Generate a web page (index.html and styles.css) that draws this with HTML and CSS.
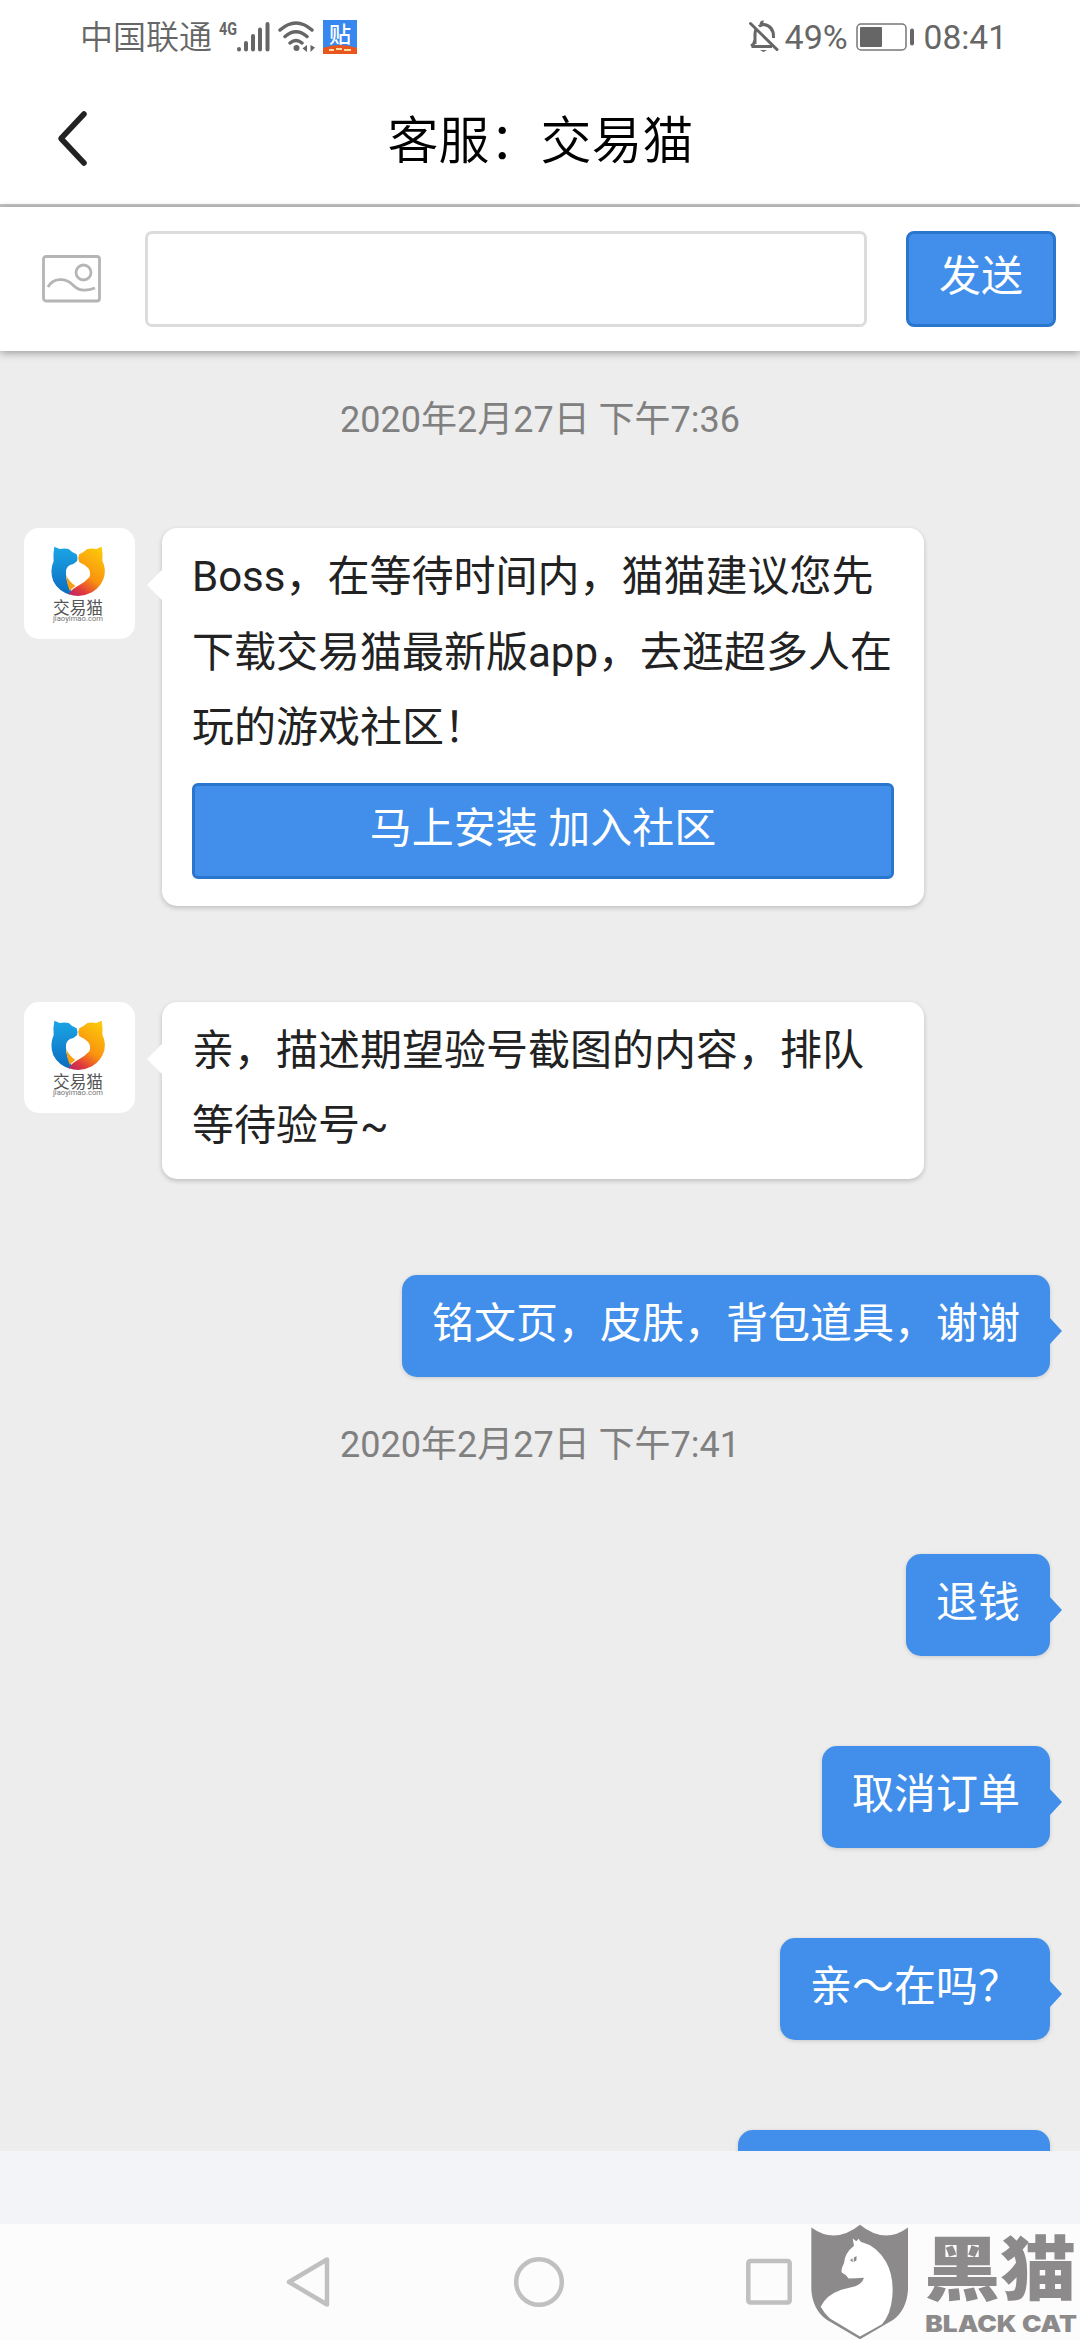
FILE: index.html
```html
<!DOCTYPE html>
<html lang="zh-CN">
<head>
    <meta charset="UTF-8">
    <meta name="viewport" content="width=device-width, initial-scale=1.0">
    <title>客服：交易猫</title>
    <link rel="stylesheet" href="styles.css">
</head>
<body>
    <!-- shared avatar logo -->
    <svg class="defs" width="0" height="0">
        <defs>
            <linearGradient id="blueCat" x1="0" y1="0" x2="0" y2="1">
                <stop offset="0" stop-color="#1ba6e6"/>
                <stop offset="1" stop-color="#0b6cc0"/>
            </linearGradient>
            <linearGradient id="goldCat" x1="0.7" y1="0" x2="0.2" y2="1">
                <stop offset="0" stop-color="#fcc60a"/>
                <stop offset="0.55" stop-color="#f9920f"/>
                <stop offset="0.85" stop-color="#e23a3c"/>
                <stop offset="1" stop-color="#c22a5e"/>
            </linearGradient>
            <symbol id="catLogo" viewBox="72 84 333 333">
                <path fill="url(#blueCat)" d="M163 140 L179 147 Q194 144 206 147 Q216 158 230 163 Q234 172 231 184 Q222 193 210 195 Q196 203 198 222 Q198 248 214 270 L210 284 Q176 275 160 244 Q148 213 161 183 Q159 160 163 140Z"/>
                <path fill="#f9a010" d="M199 226 Q207 246 226 257 L209 272 Q199 250 199 226Z"/>
                <path fill="url(#goldCat)" d="M305 140 L289 147 Q274 144 262 147 Q250 158 238 163 Q232 174 238 187 Q253 193 265 205 Q274 219 268 232 Q254 248 232 259 Q217 266 205 282 Q240 296 276 277 Q305 260 313 229 Q318 205 307 182 Q309 160 305 140Z"/>
                <text x="234" y="341" class="logo-cn" textLength="150" lengthAdjust="spacingAndGlyphs">交易猫</text>
                <text x="234" y="364" class="logo-en" textLength="150" lengthAdjust="spacingAndGlyphs">jiaoyimao.com</text>
            </symbol>
        </defs>
    </svg>

    <div class="status-bar">
        <div class="status-left">
            <span class="carrier">中国联通</span>
            <svg class="signal" width="140" height="40" viewBox="0 0 140 40">
                <text x="0" y="18" class="net" textLength="18" lengthAdjust="spacingAndGlyphs">4G</text>
                <g stroke="#666" stroke-width="4" stroke-linecap="round">
                    <path d="M20 32v0.5M27 26v6.500M34 19v13.500M41 12.500v20M48.500 7v25.500"/>
                </g>
                <g fill="none" stroke="#666" stroke-width="3.500" stroke-linecap="round">
                    <path d="M61 13Q77 -1 93 13M66 19.500Q77 10 88 19.500M71 26Q77 21 83 26"/>
                </g>
                <circle cx="77.500" cy="31" r="3" fill="#666"/>
                <path d="M88 28v7l-4.500-3.500zM91.500 28v7l4.500-4.500z" fill="#666"/>
                <rect x="104" y="3" width="34" height="34" fill="#3687f0"/>
                <path d="M104 31Q121 25 138 31V37H104Z" fill="#e8561e"/>
                <path d="M110 33h5M117 32h6M125 33h7" stroke="#fbd9a0" stroke-width="2"/>
                <text x="121" y="25" class="tieba">贴</text>
            </svg>
        </div>
        <div class="status-right">
            <svg width="32" height="34" viewBox="0 0 32 34" fill="none" stroke="#666" stroke-width="3">
                <path d="M3.500 26.500H24M7 24V14Q7 11.500 8 9.500M11 6.500Q13 4.500 16 4.500Q25.500 6 25.500 17V18M3 26Q6.500 24 7 20M13 4.500Q13.500 1.500 15.500 2"/>
                <path d="M2.500 3.500L29 29.500" stroke-linecap="round"/>
                <path d="M12 30h7l-3.500 2z" fill="#666" stroke="none"/>
            </svg>
            <span class="percent">49%</span>
            <svg class="battery" width="59" height="28" viewBox="0 0 59 28">
                <rect x="1" y="1" width="49" height="26" rx="4" fill="none" stroke="#777" stroke-width="1.500"/>
                <rect x="4" y="4" width="22" height="20" rx="1" fill="#666"/>
                <rect x="54" y="5.500" width="4" height="17" rx="2" fill="#666"/>
            </svg>
            <span class="clock">08:41</span>
        </div>
    </div>

    <div class="header">
        <svg class="back" width="31" height="58" viewBox="0 0 31 58">
            <path d="M27 4L4 28.500L27 53" fill="none" stroke="#222" stroke-width="5.500" stroke-linecap="round" stroke-linejoin="round"/>
        </svg>
        <h1>客服：交易猫</h1>
    </div>

    <div class="composer">
        <svg class="pic-icon" width="60" height="48" viewBox="0 0 60 48" fill="none" stroke="#b5b5b5" stroke-width="2.800">
            <rect x="1.500" y="1.500" width="56" height="44.500" rx="2.500"/>
            <circle cx="41.500" cy="17.500" r="7.500"/>
            <path d="M6 32C11 23 23 22 31 30C37 37 45 36 53 33"/>
        </svg>
        <input class="msg-input" type="text">
        <button class="btn send-btn">发送</button>
    </div>

    <div class="chat">
        <p class="time">2020年2月27日 下午7:36</p>

        <div class="row">
            <svg class="avatar"><use href="#catLogo"/></svg>
            <div class="bubble">
                <p>Boss，在等待时间内，猫猫建议您先<br>下载交易猫最新版app，去逛超多人在<br>玩的游戏社区！</p>
                <button class="btn install-btn">马上安装 加入社区</button>
            </div>
        </div>

        <div class="row">
            <svg class="avatar"><use href="#catLogo"/></svg>
            <div class="bubble">
                <p>亲，描述期望验号截图的内容，排队<br>等待验号~</p>
            </div>
        </div>

        <div class="row mine">
            <div class="bubble"><p>铭文页，皮肤，背包道具，谢谢</p></div>
        </div>

        <p class="time second">2020年2月27日 下午7:41</p>

        <div class="row mine">
            <div class="bubble"><p>退钱</p></div>
        </div>
        <div class="row mine">
            <div class="bubble"><p>取消订单</p></div>
        </div>
        <div class="row mine">
            <div class="bubble"><p>亲～在吗？</p></div>
        </div>
        <div class="row mine">
            <div class="bubble cut"></div>
        </div>
    </div>

    <div class="bottom-strip"></div>

    <div class="nav-bar">
        <svg width="46" height="52" viewBox="0 0 46 52">
            <path d="M42 3.500V48.500L4 26Z"/>
        </svg>
        <svg width="50" height="52" viewBox="0 0 50 52">
            <circle cx="25" cy="26" r="22.800"/>
        </svg>
        <svg width="46" height="52" viewBox="0 0 46 52">
            <rect x="2.300" y="5" width="41.400" height="41.400" rx="2"/>
        </svg>
    </div>

    <!-- watermark -->
    <svg class="watermark" viewBox="90 70 810 350">
        <path fill="#8c8a8b" d="M94 83Q166 135 240 75Q314 135 384 83V270Q380 330 340 360L240 418L140 360Q98 330 94 270Z"/>
        <path fill="#fff" d="M218 116L229 124L236 117L242 126Q290 138 318 186Q342 230 337 290Q332 345 306 373L240 410L150 356Q132 340 122 321Q138 286 184 270L226 259Q246 252 252 234Q226 236 206 236Q200 225 186 219Q181 210 192 190Q194 160 222 138Z"/>
        <path fill="#8c8a8b" d="M210 181L217 175L219 187ZM222 172L230 169L229 183L221 186Z"/>
        <text x="433" y="285" class="wm-cn" textLength="456" lengthAdjust="spacingAndGlyphs">黑猫</text>
        <text x="436" y="397" class="wm-en" textLength="455" lengthAdjust="spacingAndGlyphs">BLACK CAT</text>
    </svg>
</body>
</html>
```
FILE: styles.css
```css
:root {
    --blue: #418fea;
    --blue-dark: #2a75cd;
    --gray: #666;
    --bg: #ededed;
}

* {
    box-sizing: border-box;
}

body {
    margin: 0;
    width: 1080px;
    height: 2340px;
    overflow: hidden;
    position: relative;
    display: flex;
    flex-direction: column;
    background: #fff;
    font-family: Roboto, 'Noto Sans CJK SC', sans-serif;
}

h1, p {
    margin: 0;
    font-weight: 400;
}

.defs {
    position: absolute;
}

/* status bar */
.status-bar {
    height: 74px;
    padding: 0 73px 0 80px;
    display: flex;
    justify-content: space-between;
    color: var(--gray);
}

.status-left,
.status-right {
    display: flex;
    align-items: center;
}

.carrier {
    font-size: 33px;
    font-weight: 350;
    line-height: 74px;
    width: 139px;
    padding-top: 1px;
    white-space: nowrap;
}

.net {
    font: bold 19px Roboto, sans-serif;
    fill: var(--gray);
}

.tieba {
    font: 500 22px 'Noto Sans CJK SC', sans-serif;
    fill: #fff;
    text-anchor: middle;
}

.percent {
    font-size: 34px;
    margin-left: 5px;
    width: 71px;
}

.battery {
    margin-right: 9px;
}

.clock {
    font-size: 33.500px;
}

/* title */
.header {
    height: 133px;
    padding: 0 57px;
    display: flex;
    align-items: center;
    border-bottom: 3px solid #c3c3c3;
}

.header h1 {
    flex: 1;
    margin-right: 30px;
    padding-top: 5px;
    text-align: center;
    font-size: 51px;
    font-weight: 350;
    line-height: 1;
    color: #000;
}

/* message input */
.composer {
    height: 144px;
    padding: 0 24px 0 42px;
    display: flex;
    align-items: center;
    background: #fff;
    box-shadow: 0 2px 8px rgba(0,0,0,0.35);
    z-index: 1;
}

.pic-icon {
    margin-top: -1px;
}

.msg-input {
    width: 722px;
    height: 96px;
    margin: 0 39px 0 43px;
    border: 3px solid #dcdcdc;
    border-radius: 7px;
    background: #fff;
}

.btn {
    height: 96px;
    padding: 0 0 4px;
    border: 3px solid var(--blue-dark);
    border-radius: 8px;
    background: var(--blue);
    color: #fff;
    font-family: inherit;
    font-size: 42px;
    line-height: 1;
}

.send-btn {
    width: 150px;
}

/* chat */
.chat {
    height: 1800px;
    overflow: hidden;
    background: var(--bg);
    padding: 39px 30px 0 24px;
}

.time {
    height: 60px;
    line-height: 60px;
    text-align: center;
    font-size: 36px;
    color: #808080;
    margin: 0 0 78px 6px;
}

.time.second {
    margin: -52px 0 79px 6px;
}

.row {
    display: flex;
    align-items: flex-start;
    margin-bottom: 96px;
}

.row.mine {
    justify-content: flex-end;
    margin-bottom: 90px;
}

.avatar {
    width: 111px;
    height: 111px;
    margin-right: 27px;
    border-radius: 15px;
    background: #fff;
}

.logo-cn {
    font: 400 50px 'Noto Sans CJK SC', sans-serif;
    fill: #555;
    text-anchor: middle;
}

.logo-en {
    font: 22px Roboto, sans-serif;
    fill: #777;
    text-anchor: middle;
}

.bubble {
    position: relative;
    width: 762px;
    padding: 11px 30px 15px;
    border-radius: 15px;
    background: #fff;
    color: #222;
    box-shadow: 0 2px 5px rgba(0,0,0,0.2);
}

.bubble p {
    font-size: 42px;
    line-height: 75.500px;
    white-space: nowrap;
}

.bubble::before {
    content: '';
    position: absolute;
    left: -15px;
    top: 42px;
    border: 15px solid transparent;
    border-left: 0;
    border-right-color: #fff;
}

.mine .bubble {
    width: auto;
    height: 102px;
    background: var(--blue);
    color: #fff;
    box-shadow: 0 1px 4px rgba(0,0,0,0.15);
}

.mine .bubble::before {
    left: auto;
    right: -12px;
    top: 43px;
    border: 13px solid transparent;
    border-right: 0;
    border-left: 12px solid var(--blue);
}

.mine .cut {
    width: 312px;
}

.install-btn {
    display: block;
    width: 702px;
    margin: 17px 0 12px;
    border-radius: 6px;
}

/* bottom */
.bottom-strip {
    height: 73px;
    background: #f2f4f8;
}

.nav-bar {
    flex: 1;
    padding: 0 288px 0 285px;
    display: flex;
    align-items: center;
    justify-content: space-between;
    background: #fcfcfc;
}

.nav-bar svg {
    fill: none;
    stroke: #c0c0c0;
    stroke-width: 4.500;
    stroke-linejoin: round;
}

.watermark {
    position: absolute;
    right: 0;
    bottom: 0;
    width: 270px;
    height: 117px;
    overflow: visible;
}

.wm-cn {
    font: 900 212px 'Noto Sans CJK SC', sans-serif;
    fill: #8c8a8b;
}

.wm-en {
    font: 900 68px Inter, Roboto, sans-serif;
    fill: #8c8a8b;
}
```
